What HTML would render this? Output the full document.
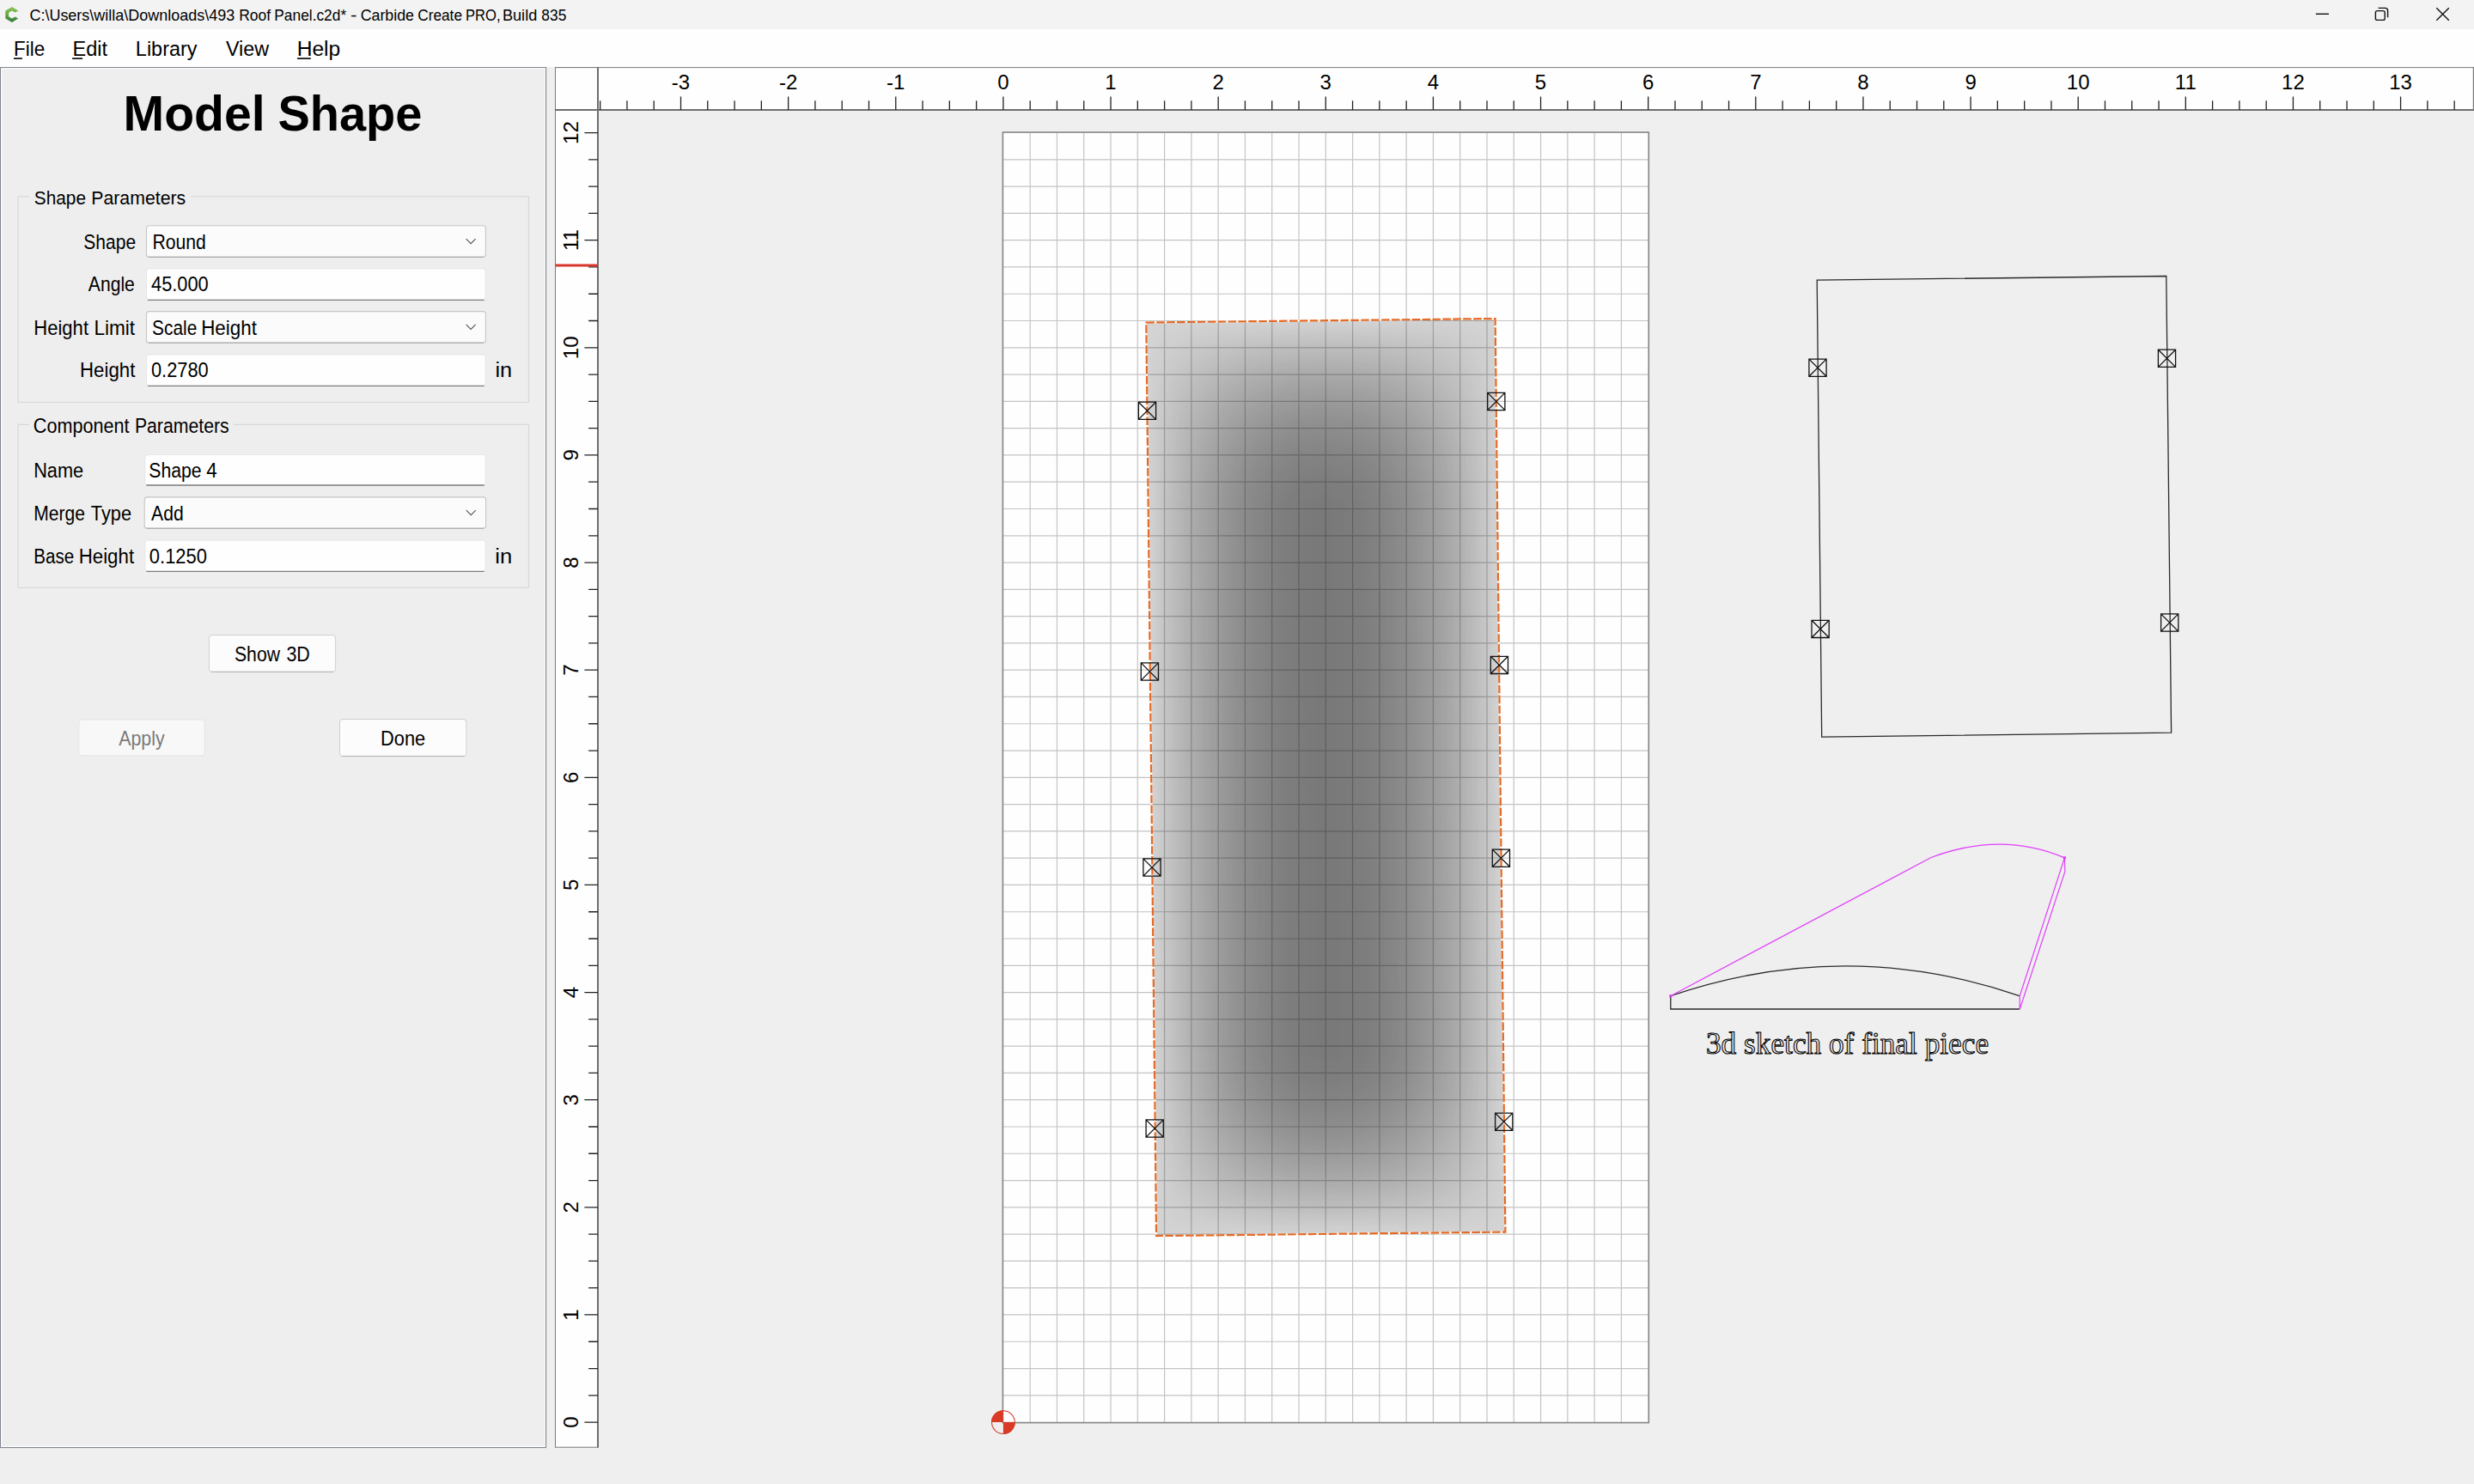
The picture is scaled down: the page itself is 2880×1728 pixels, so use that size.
<!DOCTYPE html><html><head><meta charset="utf-8"><style>html,body{margin:0;padding:0;width:2880px;height:1728px;overflow:hidden;background:#efefef}</style></head><body><svg width="2880" height="1728" viewBox="0 0 2880 1728" style="position:absolute;left:0;top:0">
<rect x="0" y="0" width="2880" height="1728" fill="#efefef"/>
<rect x="0" y="0" width="2880" height="34" fill="#f3f3f3"/>
<rect x="0" y="34" width="2880" height="44" fill="#fefefe"/>
<defs><linearGradient id="ig" x1="0" y1="0" x2="0" y2="1"><stop offset="0" stop-color="#8cc45a"/><stop offset="0.45" stop-color="#6aaa48"/><stop offset="1" stop-color="#2f7a3c"/></linearGradient></defs>
<g transform="translate(13.9,17)"><path d="M7.4,-4.5 L0,-8.9 L-7.6,-4.5 L-7.6,4.5 L0,8.9 L7.4,4.5 L3.7,2.4 L0,4.5 L-3.8,2.3 L-3.8,-2.3 L0,-4.5 L3.7,-2.4 Z" fill="url(#ig)"/></g>
<text transform="matrix(0.9589 0 0 1 34.44 23.90)" font-family="Liberation Sans" font-weight="normal" font-size="18.76" fill="#000" >C:\Users\willa\Downloads\493</text>
<text transform="matrix(0.9338 0 0 1 278.20 23.90)" font-family="Liberation Sans" font-weight="normal" font-size="18.76" fill="#000" >Roof</text>
<text transform="matrix(0.9249 0 0 1 319.31 23.90)" font-family="Liberation Sans" font-weight="normal" font-size="18.76" fill="#000" >Panel.c2d*</text>
<text transform="matrix(1.2000 0 0 1 407.95 23.90)" font-family="Liberation Sans" font-weight="normal" font-size="18.76" fill="#000" >-</text>
<text transform="matrix(0.9487 0 0 1 419.65 23.90)" font-family="Liberation Sans" font-weight="normal" font-size="18.76" fill="#000" >Carbide</text>
<text transform="matrix(0.9211 0 0 1 486.18 23.90)" font-family="Liberation Sans" font-weight="normal" font-size="18.76" fill="#000" >Create</text>
<text transform="matrix(0.8845 0 0 1 542.07 23.90)" font-family="Liberation Sans" font-weight="normal" font-size="18.76" fill="#000" >PRO,</text>
<text transform="matrix(0.9667 0 0 1 584.95 23.90)" font-family="Liberation Sans" font-weight="normal" font-size="18.76" fill="#000" >Build</text>
<text transform="matrix(0.9277 0 0 1 630.30 23.90)" font-family="Liberation Sans" font-weight="normal" font-size="18.76" fill="#000" >835</text>
<line x1="2695.9" y1="16.3" x2="2711" y2="16.3" stroke="#111" stroke-width="1.4"/>
<rect x="2765.4" y="12.6" width="10.8" height="10.8" rx="2" fill="none" stroke="#111" stroke-width="1.4"/>
<path d="M2768.6,9.4 L2776.6,9.4 Q2779.6,9.4 2779.6,12.4 L2779.6,20.2" fill="none" stroke="#111" stroke-width="1.4"/>
<path d="M2836.3,9.3 L2850.8,23.8 M2850.8,9.3 L2836.3,23.8" stroke="#111" stroke-width="1.4"/>
<text transform="matrix(0.9250 0 0 1 15.95 64.80)" font-family="Liberation Sans" font-weight="normal" font-size="24.29" fill="#000" >File</text>
<text transform="matrix(0.9691 0 0 1 84.46 64.80)" font-family="Liberation Sans" font-weight="normal" font-size="24.29" fill="#000" >Edit</text>
<text transform="matrix(0.9650 0 0 1 157.87 64.80)" font-family="Liberation Sans" font-weight="normal" font-size="24.29" fill="#000" >Library</text>
<text transform="matrix(0.9612 0 0 1 262.98 64.80)" font-family="Liberation Sans" font-weight="normal" font-size="24.29" fill="#000" >View</text>
<text transform="matrix(1.0133 0 0 1 345.67 64.80)" font-family="Liberation Sans" font-weight="normal" font-size="24.29" fill="#000" >Help</text>
<rect x="16" y="67.3" width="9.9" height="1.6" fill="#000"/>
<rect x="84.1" y="67.3" width="12.0" height="1.6" fill="#000"/>
<rect x="346" y="67.3" width="15.8" height="1.6" fill="#000"/>
<rect x="0.5" y="78.6" width="635" height="1606.9" fill="#eeeeee" stroke="#80858e" stroke-width="1.2"/>
<rect x="1.6" y="79.7" width="632.8" height="1604.7" fill="none" stroke="#ffffff" stroke-width="1"/>
<text transform="matrix(0.9981 0 0 1 143.53 152.10)" font-family="Liberation Sans" font-weight="bold" font-size="57.31" fill="#000" >Model</text>
<text transform="matrix(0.9771 0 0 1 323.41 152.10)" font-family="Liberation Sans" font-weight="bold" font-size="57.31" fill="#000" >Shape</text>
<path d="M34,228.8 L21,228.8 L21,468.4 L615.5,468.4 L615.5,228.8 L222,228.8" fill="none" stroke="#d9d9d9" stroke-width="1.2"/>
<path d="M34,494.4 L21,494.4 L21,684.4 L615.5,684.4 L615.5,494.4 L272,494.4" fill="none" stroke="#d9d9d9" stroke-width="1.2"/>
<text transform="matrix(0.9238 0 0 1 39.78 237.80)" font-family="Liberation Sans" font-weight="normal" font-size="22.55" fill="#000" >Shape</text>
<text transform="matrix(0.9443 0 0 1 106.23 237.80)" font-family="Liberation Sans" font-weight="normal" font-size="22.55" fill="#000" >Parameters</text>
<text transform="matrix(0.9353 0 0 1 38.85 504.30)" font-family="Liberation Sans" font-weight="normal" font-size="23.13" fill="#000" >Component</text>
<text transform="matrix(0.9189 0 0 1 156.88 504.30)" font-family="Liberation Sans" font-weight="normal" font-size="23.13" fill="#000" >Parameters</text>
<rect x="170.5" y="262.70000000000005" width="394.9000000000001" height="36.69999999999993" rx="3" fill="#fbfbfb" stroke="#c6c6c6" stroke-width="1.1"/>
<line x1="173.0" y1="299.29999999999995" x2="562.9000000000001" y2="299.29999999999995" stroke="#a2a2a2" stroke-width="1"/>
<path d="M542.6000000000001,278.05 L548.1000000000001,283.65000000000003 L553.6000000000001,278.05" fill="none" stroke="#555" stroke-width="1.1"/>
<rect x="170.5" y="312.90000000000003" width="394.70000000000005" height="36.69999999999993" rx="3" fill="#fefefe" stroke="#e6e6e6" stroke-width="1"/>
<line x1="172.0" y1="349.29999999999995" x2="563.7" y2="349.29999999999995" stroke="#7b7b7b" stroke-width="1.3"/>
<rect x="170.5" y="362.6" width="394.9000000000001" height="36.599999999999966" rx="3" fill="#fbfbfb" stroke="#c6c6c6" stroke-width="1.1"/>
<line x1="173.0" y1="399.09999999999997" x2="562.9000000000001" y2="399.09999999999997" stroke="#a2a2a2" stroke-width="1"/>
<path d="M542.6000000000001,377.9 L548.1000000000001,383.5 L553.6000000000001,377.9" fill="none" stroke="#555" stroke-width="1.1"/>
<rect x="170.5" y="413.0" width="394.70000000000005" height="36.599999999999966" rx="3" fill="#fefefe" stroke="#e6e6e6" stroke-width="1"/>
<line x1="172.0" y1="449.29999999999995" x2="563.7" y2="449.29999999999995" stroke="#7b7b7b" stroke-width="1.3"/>
<rect x="168.8" y="529.5" width="396.40000000000003" height="35.799999999999955" rx="3" fill="#fefefe" stroke="#e6e6e6" stroke-width="1"/>
<line x1="170.3" y1="565.0" x2="563.7" y2="565.0" stroke="#7b7b7b" stroke-width="1.3"/>
<rect x="168.20000000000002" y="578.9" width="397.4" height="36.39999999999998" rx="3" fill="#fbfbfb" stroke="#c6c6c6" stroke-width="1.1"/>
<line x1="170.70000000000002" y1="615.1999999999999" x2="563.1" y2="615.1999999999999" stroke="#a2a2a2" stroke-width="1"/>
<path d="M542.8000000000001,594.0999999999999 L548.3000000000001,599.6999999999999 L553.8000000000001,594.0999999999999" fill="none" stroke="#555" stroke-width="1.1"/>
<rect x="168.8" y="629.1" width="396.40000000000003" height="36.5" rx="3" fill="#fefefe" stroke="#e6e6e6" stroke-width="1"/>
<line x1="170.3" y1="665.3000000000001" x2="563.7" y2="665.3000000000001" stroke="#7b7b7b" stroke-width="1.3"/>
<text transform="matrix(0.9046 0 0 1 97.28 290.20)" font-family="Liberation Sans" font-weight="normal" font-size="23.27" fill="#000" >Shape</text>
<text transform="matrix(0.9119 0 0 1 177.39 290.20)" font-family="Liberation Sans" font-weight="normal" font-size="23.27" fill="#000" >Round</text>
<text transform="matrix(0.9079 0 0 1 102.80 339.30)" font-family="Liberation Sans" font-weight="normal" font-size="23.27" fill="#000" >Angle</text>
<text transform="matrix(0.9379 0 0 1 176.03 339.30)" font-family="Liberation Sans" font-weight="normal" font-size="23.27" fill="#000" >45.000</text>
<text transform="matrix(0.9489 0 0 1 39.22 389.80)" font-family="Liberation Sans" font-weight="normal" font-size="23.27" fill="#000" >Height</text>
<text transform="matrix(0.9723 0 0 1 109.38 389.80)" font-family="Liberation Sans" font-weight="normal" font-size="23.27" fill="#000" >Limit</text>
<text transform="matrix(0.8964 0 0 1 177.09 389.80)" font-family="Liberation Sans" font-weight="normal" font-size="23.27" fill="#000" >Scale</text>
<text transform="matrix(0.9628 0 0 1 234.19 389.80)" font-family="Liberation Sans" font-weight="normal" font-size="23.27" fill="#000" >Height</text>
<text transform="matrix(0.9566 0 0 1 93.01 439.30)" font-family="Liberation Sans" font-weight="normal" font-size="23.27" fill="#000" >Height</text>
<text transform="matrix(0.9386 0 0 1 175.98 439.30)" font-family="Liberation Sans" font-weight="normal" font-size="23.27" fill="#000" >0.2780</text>
<text transform="matrix(1.0867 0 0 1 576.47 438.90)" font-family="Liberation Sans" font-weight="normal" font-size="23.27" fill="#000" >in</text>
<text transform="matrix(0.9353 0 0 1 39.15 556.20)" font-family="Liberation Sans" font-weight="normal" font-size="23.27" fill="#000" >Name</text>
<text transform="matrix(0.9123 0 0 1 173.27 556.20)" font-family="Liberation Sans" font-weight="normal" font-size="23.27" fill="#000" >Shape</text>
<text transform="matrix(0.9617 0 0 1 240.32 556.20)" font-family="Liberation Sans" font-weight="normal" font-size="23.27" fill="#000" >4</text>
<text transform="matrix(0.9048 0 0 1 39.20 606.00)" font-family="Liberation Sans" font-weight="normal" font-size="23.27" fill="#000" >Merge</text>
<text transform="matrix(0.9371 0 0 1 105.83 606.00)" font-family="Liberation Sans" font-weight="normal" font-size="23.27" fill="#000" >Type</text>
<text transform="matrix(0.9100 0 0 1 176.10 606.00)" font-family="Liberation Sans" font-weight="normal" font-size="23.27" fill="#000" >Add</text>
<text transform="matrix(0.8878 0 0 1 39.24 655.90)" font-family="Liberation Sans" font-weight="normal" font-size="23.27" fill="#000" >Base</text>
<text transform="matrix(0.9582 0 0 1 91.70 655.90)" font-family="Liberation Sans" font-weight="normal" font-size="23.27" fill="#000" >Height</text>
<text transform="matrix(0.9430 0 0 1 173.87 655.90)" font-family="Liberation Sans" font-weight="normal" font-size="23.27" fill="#000" >0.1250</text>
<text transform="matrix(1.1000 0 0 1 576.35 655.60)" font-family="Liberation Sans" font-weight="normal" font-size="23.27" fill="#000" >in</text>
<rect x="243.4" y="739.5" width="147.19999999999996" height="42.89999999999998" rx="3.5" fill="#fcfcfc" stroke="#d0d0d0" stroke-width="1"/>
<line x1="245.9" y1="782.3" x2="388.09999999999997" y2="782.3" stroke="#b0b0b0" stroke-width="1"/>
<rect x="91.8" y="837.9" width="146.5" height="42.0" rx="3.5" fill="#f8f8f8" stroke="#e4e4e4" stroke-width="1"/>
<rect x="395.5" y="837.5" width="147.4000000000001" height="43.10000000000002" rx="3.5" fill="#fcfcfc" stroke="#d0d0d0" stroke-width="1"/>
<line x1="398.0" y1="880.5" x2="540.4000000000001" y2="880.5" stroke="#b0b0b0" stroke-width="1"/>
<text transform="matrix(0.9103 0 0 1 272.98 770.40)" font-family="Liberation Sans" font-weight="normal" font-size="23.27" fill="#000" >Show</text>
<text transform="matrix(0.9225 0 0 1 333.39 770.40)" font-family="Liberation Sans" font-weight="normal" font-size="23.27" fill="#000" >3D</text>
<text transform="matrix(0.9187 0 0 1 138.20 868.40)" font-family="Liberation Sans" font-weight="normal" font-size="23.27" fill="#7a7a7a" >Apply</text>
<text transform="matrix(0.9387 0 0 1 443.04 868.40)" font-family="Liberation Sans" font-weight="normal" font-size="23.27" fill="#000" >Done</text>
<rect x="646.5" y="78.6" width="2233" height="49.4" fill="#fefefe" stroke="#7a7a7a" stroke-width="1"/>
<rect x="646.5" y="78.6" width="49.4" height="1606.6" fill="#fefefe" stroke="#7a7a7a" stroke-width="1"/>
<line x1="646" y1="128" x2="2880" y2="128" stroke="#6e6e6e" stroke-width="2"/>
<line x1="696" y1="78" x2="696" y2="1685.5" stroke="#6e6e6e" stroke-width="2"/>
<line x1="2879.4" y1="78" x2="2879.4" y2="128" stroke="#7a7a7a" stroke-width="1.2"/>
<path d="M698.66,117.2 L698.66,128 M729.95,117.2 L729.95,128 M761.23,117.2 L761.23,128 M792.51,112.4 L792.51,128 M823.79,117.2 L823.79,128 M855.08,117.2 L855.08,128 M886.36,117.2 L886.36,128 M917.64,112.4 L917.64,128 M948.92,117.2 L948.92,128 M980.21,117.2 L980.21,128 M1011.49,117.2 L1011.49,128 M1042.77,112.4 L1042.77,128 M1074.05,117.2 L1074.05,128 M1105.34,117.2 L1105.34,128 M1136.62,117.2 L1136.62,128 M1167.90,112.4 L1167.90,128 M1199.18,117.2 L1199.18,128 M1230.47,117.2 L1230.47,128 M1261.75,117.2 L1261.75,128 M1293.03,112.4 L1293.03,128 M1324.31,117.2 L1324.31,128 M1355.60,117.2 L1355.60,128 M1386.88,117.2 L1386.88,128 M1418.16,112.4 L1418.16,128 M1449.44,117.2 L1449.44,128 M1480.73,117.2 L1480.73,128 M1512.01,117.2 L1512.01,128 M1543.29,112.4 L1543.29,128 M1574.57,117.2 L1574.57,128 M1605.86,117.2 L1605.86,128 M1637.14,117.2 L1637.14,128 M1668.42,112.4 L1668.42,128 M1699.70,117.2 L1699.70,128 M1730.99,117.2 L1730.99,128 M1762.27,117.2 L1762.27,128 M1793.55,112.4 L1793.55,128 M1824.83,117.2 L1824.83,128 M1856.12,117.2 L1856.12,128 M1887.40,117.2 L1887.40,128 M1918.68,112.4 L1918.68,128 M1949.96,117.2 L1949.96,128 M1981.25,117.2 L1981.25,128 M2012.53,117.2 L2012.53,128 M2043.81,112.4 L2043.81,128 M2075.09,117.2 L2075.09,128 M2106.38,117.2 L2106.38,128 M2137.66,117.2 L2137.66,128 M2168.94,112.4 L2168.94,128 M2200.22,117.2 L2200.22,128 M2231.51,117.2 L2231.51,128 M2262.79,117.2 L2262.79,128 M2294.07,112.4 L2294.07,128 M2325.35,117.2 L2325.35,128 M2356.64,117.2 L2356.64,128 M2387.92,117.2 L2387.92,128 M2419.20,112.4 L2419.20,128 M2450.48,117.2 L2450.48,128 M2481.77,117.2 L2481.77,128 M2513.05,117.2 L2513.05,128 M2544.33,112.4 L2544.33,128 M2575.61,117.2 L2575.61,128 M2606.89,117.2 L2606.89,128 M2638.18,117.2 L2638.18,128 M2669.46,112.4 L2669.46,128 M2700.74,117.2 L2700.74,128 M2732.03,117.2 L2732.03,128 M2763.31,117.2 L2763.31,128 M2794.59,112.4 L2794.59,128 M2825.87,117.2 L2825.87,128 M2857.15,117.2 L2857.15,128" stroke="#222" stroke-width="1.3"/>
<g font-family="Liberation Sans" font-size="24" fill="#000"><text x="792.51" y="104.1" text-anchor="middle">-3</text><text x="917.64" y="104.1" text-anchor="middle">-2</text><text x="1042.77" y="104.1" text-anchor="middle">-1</text><text x="1167.90" y="104.1" text-anchor="middle">0</text><text x="1293.03" y="104.1" text-anchor="middle">1</text><text x="1418.16" y="104.1" text-anchor="middle">2</text><text x="1543.29" y="104.1" text-anchor="middle">3</text><text x="1668.42" y="104.1" text-anchor="middle">4</text><text x="1793.55" y="104.1" text-anchor="middle">5</text><text x="1918.68" y="104.1" text-anchor="middle">6</text><text x="2043.81" y="104.1" text-anchor="middle">7</text><text x="2168.94" y="104.1" text-anchor="middle">8</text><text x="2294.07" y="104.1" text-anchor="middle">9</text><text x="2419.20" y="104.1" text-anchor="middle">10</text><text x="2544.33" y="104.1" text-anchor="middle">11</text><text x="2669.46" y="104.1" text-anchor="middle">12</text><text x="2794.59" y="104.1" text-anchor="middle">13</text></g>
<path d="M680.4,1656.10 L696,1656.10 M685.1,1624.82 L696,1624.82 M685.1,1593.53 L696,1593.53 M685.1,1562.25 L696,1562.25 M680.4,1530.97 L696,1530.97 M685.1,1499.69 L696,1499.69 M685.1,1468.40 L696,1468.40 M685.1,1437.12 L696,1437.12 M680.4,1405.84 L696,1405.84 M685.1,1374.56 L696,1374.56 M685.1,1343.27 L696,1343.27 M685.1,1311.99 L696,1311.99 M680.4,1280.71 L696,1280.71 M685.1,1249.43 L696,1249.43 M685.1,1218.14 L696,1218.14 M685.1,1186.86 L696,1186.86 M680.4,1155.58 L696,1155.58 M685.1,1124.30 L696,1124.30 M685.1,1093.01 L696,1093.01 M685.1,1061.73 L696,1061.73 M680.4,1030.45 L696,1030.45 M685.1,999.17 L696,999.17 M685.1,967.88 L696,967.88 M685.1,936.60 L696,936.60 M680.4,905.32 L696,905.32 M685.1,874.04 L696,874.04 M685.1,842.75 L696,842.75 M685.1,811.47 L696,811.47 M680.4,780.19 L696,780.19 M685.1,748.91 L696,748.91 M685.1,717.62 L696,717.62 M685.1,686.34 L696,686.34 M680.4,655.06 L696,655.06 M685.1,623.78 L696,623.78 M685.1,592.49 L696,592.49 M685.1,561.21 L696,561.21 M680.4,529.93 L696,529.93 M685.1,498.65 L696,498.65 M685.1,467.37 L696,467.37 M685.1,436.08 L696,436.08 M680.4,404.80 L696,404.80 M685.1,373.52 L696,373.52 M685.1,342.23 L696,342.23 M685.1,310.95 L696,310.95 M680.4,279.67 L696,279.67 M685.1,248.39 L696,248.39 M685.1,217.11 L696,217.11 M685.1,185.82 L696,185.82 M680.4,154.54 L696,154.54" stroke="#222" stroke-width="1.3"/>
<g font-family="Liberation Sans" font-size="24" fill="#000"><text transform="translate(672.6,1656.10) rotate(-90)" text-anchor="middle">0</text><text transform="translate(672.6,1530.97) rotate(-90)" text-anchor="middle">1</text><text transform="translate(672.6,1405.84) rotate(-90)" text-anchor="middle">2</text><text transform="translate(672.6,1280.71) rotate(-90)" text-anchor="middle">3</text><text transform="translate(672.6,1155.58) rotate(-90)" text-anchor="middle">4</text><text transform="translate(672.6,1030.45) rotate(-90)" text-anchor="middle">5</text><text transform="translate(672.6,905.32) rotate(-90)" text-anchor="middle">6</text><text transform="translate(672.6,780.19) rotate(-90)" text-anchor="middle">7</text><text transform="translate(672.6,655.06) rotate(-90)" text-anchor="middle">8</text><text transform="translate(672.6,529.93) rotate(-90)" text-anchor="middle">9</text><text transform="translate(672.6,404.80) rotate(-90)" text-anchor="middle">10</text><text transform="translate(672.6,279.67) rotate(-90)" text-anchor="middle">11</text><text transform="translate(672.6,154.54) rotate(-90)" text-anchor="middle">12</text></g>
<line x1="646.5" y1="308.9" x2="696" y2="308.9" stroke="#d9372a" stroke-width="3"/>
<rect x="1167.90" y="154.54" width="750.78" height="1501.56" fill="#fefefe"/>
<path d="M1199.18,154.54 L1199.18,1656.10 M1230.47,154.54 L1230.47,1656.10 M1261.75,154.54 L1261.75,1656.10 M1293.03,154.54 L1293.03,1656.10 M1324.31,154.54 L1324.31,1656.10 M1355.60,154.54 L1355.60,1656.10 M1386.88,154.54 L1386.88,1656.10 M1418.16,154.54 L1418.16,1656.10 M1449.44,154.54 L1449.44,1656.10 M1480.73,154.54 L1480.73,1656.10 M1512.01,154.54 L1512.01,1656.10 M1543.29,154.54 L1543.29,1656.10 M1574.57,154.54 L1574.57,1656.10 M1605.86,154.54 L1605.86,1656.10 M1637.14,154.54 L1637.14,1656.10 M1668.42,154.54 L1668.42,1656.10 M1699.70,154.54 L1699.70,1656.10 M1730.99,154.54 L1730.99,1656.10 M1762.27,154.54 L1762.27,1656.10 M1793.55,154.54 L1793.55,1656.10 M1824.83,154.54 L1824.83,1656.10 M1856.12,154.54 L1856.12,1656.10 M1887.40,154.54 L1887.40,1656.10 M1167.90,185.82 L1918.68,185.82 M1167.90,217.10 L1918.68,217.10 M1167.90,248.39 L1918.68,248.39 M1167.90,279.67 L1918.68,279.67 M1167.90,310.95 L1918.68,310.95 M1167.90,342.23 L1918.68,342.23 M1167.90,373.52 L1918.68,373.52 M1167.90,404.80 L1918.68,404.80 M1167.90,436.08 L1918.68,436.08 M1167.90,467.36 L1918.68,467.36 M1167.90,498.65 L1918.68,498.65 M1167.90,529.93 L1918.68,529.93 M1167.90,561.21 L1918.68,561.21 M1167.90,592.49 L1918.68,592.49 M1167.90,623.78 L1918.68,623.78 M1167.90,655.06 L1918.68,655.06 M1167.90,686.34 L1918.68,686.34 M1167.90,717.62 L1918.68,717.62 M1167.90,748.91 L1918.68,748.91 M1167.90,780.19 L1918.68,780.19 M1167.90,811.47 L1918.68,811.47 M1167.90,842.75 L1918.68,842.75 M1167.90,874.04 L1918.68,874.04 M1167.90,905.32 L1918.68,905.32 M1167.90,936.60 L1918.68,936.60 M1167.90,967.88 L1918.68,967.88 M1167.90,999.17 L1918.68,999.17 M1167.90,1030.45 L1918.68,1030.45 M1167.90,1061.73 L1918.68,1061.73 M1167.90,1093.01 L1918.68,1093.01 M1167.90,1124.30 L1918.68,1124.30 M1167.90,1155.58 L1918.68,1155.58 M1167.90,1186.86 L1918.68,1186.86 M1167.90,1218.14 L1918.68,1218.14 M1167.90,1249.43 L1918.68,1249.43 M1167.90,1280.71 L1918.68,1280.71 M1167.90,1311.99 L1918.68,1311.99 M1167.90,1343.27 L1918.68,1343.27 M1167.90,1374.56 L1918.68,1374.56 M1167.90,1405.84 L1918.68,1405.84 M1167.90,1437.12 L1918.68,1437.12 M1167.90,1468.40 L1918.68,1468.40 M1167.90,1499.69 L1918.68,1499.69 M1167.90,1530.97 L1918.68,1530.97 M1167.90,1562.25 L1918.68,1562.25 M1167.90,1593.53 L1918.68,1593.53 M1167.90,1624.82 L1918.68,1624.82" stroke="#c4c4c4" stroke-width="1.2"/>
<rect x="1167.40" y="154.04" width="751.88" height="1502.56" fill="none" stroke="#848484" stroke-width="1.6"/>
<defs><linearGradient id="hg" gradientUnits="userSpaceOnUse" x1="-203.15" y1="0" x2="203.15" y2="0"><stop offset="0.0000" stop-color="#000" stop-opacity="0.0000"/><stop offset="0.0250" stop-color="#000" stop-opacity="0.0417"/><stop offset="0.0500" stop-color="#000" stop-opacity="0.0812"/><stop offset="0.0750" stop-color="#000" stop-opacity="0.1186"/><stop offset="0.1000" stop-color="#000" stop-opacity="0.1538"/><stop offset="0.1250" stop-color="#000" stop-opacity="0.1869"/><stop offset="0.1500" stop-color="#000" stop-opacity="0.2179"/><stop offset="0.1750" stop-color="#000" stop-opacity="0.2467"/><stop offset="0.2000" stop-color="#000" stop-opacity="0.2734"/><stop offset="0.2250" stop-color="#000" stop-opacity="0.2980"/><stop offset="0.2500" stop-color="#000" stop-opacity="0.3204"/><stop offset="0.2750" stop-color="#000" stop-opacity="0.3407"/><stop offset="0.3000" stop-color="#000" stop-opacity="0.3589"/><stop offset="0.3250" stop-color="#000" stop-opacity="0.3749"/><stop offset="0.3500" stop-color="#000" stop-opacity="0.3888"/><stop offset="0.3750" stop-color="#000" stop-opacity="0.4005"/><stop offset="0.4000" stop-color="#000" stop-opacity="0.4101"/><stop offset="0.4250" stop-color="#000" stop-opacity="0.4176"/><stop offset="0.4500" stop-color="#000" stop-opacity="0.4230"/><stop offset="0.4750" stop-color="#000" stop-opacity="0.4262"/><stop offset="0.5000" stop-color="#000" stop-opacity="0.4272"/><stop offset="0.5250" stop-color="#000" stop-opacity="0.4262"/><stop offset="0.5500" stop-color="#000" stop-opacity="0.4230"/><stop offset="0.5750" stop-color="#000" stop-opacity="0.4176"/><stop offset="0.6000" stop-color="#000" stop-opacity="0.4101"/><stop offset="0.6250" stop-color="#000" stop-opacity="0.4005"/><stop offset="0.6500" stop-color="#000" stop-opacity="0.3888"/><stop offset="0.6750" stop-color="#000" stop-opacity="0.3749"/><stop offset="0.7000" stop-color="#000" stop-opacity="0.3589"/><stop offset="0.7250" stop-color="#000" stop-opacity="0.3407"/><stop offset="0.7500" stop-color="#000" stop-opacity="0.3204"/><stop offset="0.7750" stop-color="#000" stop-opacity="0.2980"/><stop offset="0.8000" stop-color="#000" stop-opacity="0.2734"/><stop offset="0.8250" stop-color="#000" stop-opacity="0.2467"/><stop offset="0.8500" stop-color="#000" stop-opacity="0.2179"/><stop offset="0.8750" stop-color="#000" stop-opacity="0.1869"/><stop offset="0.9000" stop-color="#000" stop-opacity="0.1538"/><stop offset="0.9250" stop-color="#000" stop-opacity="0.1186"/><stop offset="0.9500" stop-color="#000" stop-opacity="0.0812"/><stop offset="0.9750" stop-color="#000" stop-opacity="0.0417"/><stop offset="1.0000" stop-color="#000" stop-opacity="0.0000"/></linearGradient><linearGradient id="vg" gradientUnits="userSpaceOnUse" x1="0" y1="-531.8" x2="0" y2="531.8"><stop offset="0.00000" stop-color="#fff" stop-opacity="0.0000"/><stop offset="0.01381" stop-color="#fff" stop-opacity="0.1211"/><stop offset="0.02762" stop-color="#fff" stop-opacity="0.2344"/><stop offset="0.04143" stop-color="#fff" stop-opacity="0.3398"/><stop offset="0.05524" stop-color="#fff" stop-opacity="0.4375"/><stop offset="0.06905" stop-color="#fff" stop-opacity="0.5273"/><stop offset="0.08286" stop-color="#fff" stop-opacity="0.6094"/><stop offset="0.09666" stop-color="#fff" stop-opacity="0.6836"/><stop offset="0.11047" stop-color="#fff" stop-opacity="0.7500"/><stop offset="0.12428" stop-color="#fff" stop-opacity="0.8086"/><stop offset="0.13809" stop-color="#fff" stop-opacity="0.8594"/><stop offset="0.15190" stop-color="#fff" stop-opacity="0.9023"/><stop offset="0.16571" stop-color="#fff" stop-opacity="0.9375"/><stop offset="0.17952" stop-color="#fff" stop-opacity="0.9648"/><stop offset="0.19333" stop-color="#fff" stop-opacity="0.9844"/><stop offset="0.20714" stop-color="#fff" stop-opacity="0.9961"/><stop offset="0.22095" stop-color="#fff" stop-opacity="1.0000"/><stop offset="0.77905" stop-color="#fff" stop-opacity="1.0000"/><stop offset="0.79286" stop-color="#fff" stop-opacity="0.9961"/><stop offset="0.80667" stop-color="#fff" stop-opacity="0.9844"/><stop offset="0.82048" stop-color="#fff" stop-opacity="0.9648"/><stop offset="0.83429" stop-color="#fff" stop-opacity="0.9375"/><stop offset="0.84810" stop-color="#fff" stop-opacity="0.9023"/><stop offset="0.86191" stop-color="#fff" stop-opacity="0.8594"/><stop offset="0.87572" stop-color="#fff" stop-opacity="0.8086"/><stop offset="0.88953" stop-color="#fff" stop-opacity="0.7500"/><stop offset="0.90334" stop-color="#fff" stop-opacity="0.6836"/><stop offset="0.91714" stop-color="#fff" stop-opacity="0.6094"/><stop offset="0.93095" stop-color="#fff" stop-opacity="0.5273"/><stop offset="0.94476" stop-color="#fff" stop-opacity="0.4375"/><stop offset="0.95857" stop-color="#fff" stop-opacity="0.3398"/><stop offset="0.97238" stop-color="#fff" stop-opacity="0.2344"/><stop offset="0.98619" stop-color="#fff" stop-opacity="0.1211"/><stop offset="1.00000" stop-color="#fff" stop-opacity="0.0000"/></linearGradient><mask id="vm" maskUnits="userSpaceOnUse" x="-208.15" y="-536.8" width="416.3" height="1073.6"><rect x="-203.15" y="-531.8" width="406.3" height="1063.6" fill="url(#vg)"/></mask></defs>
<g transform="translate(1543.35,905.05) rotate(-0.634)">
<rect x="-203.15" y="-531.8" width="406.3" height="1063.6" fill="#000" fill-opacity="0.1647"/>
<rect x="-203.15" y="-531.8" width="406.3" height="1063.6" fill="url(#hg)" mask="url(#vm)"/>
<rect x="-203.15" y="-531.8" width="406.3" height="1063.6" fill="none" stroke="#ffffff" stroke-width="2.2"/>
<rect x="-203.15" y="-531.8" width="406.3" height="1063.6" fill="none" stroke="#e56a25" stroke-width="2.2" stroke-dasharray="9.6 2.3"/>
</g>
<path d="M1325.40,468.20 h20.2 v20.2 h-20.2 Z M1325.40,468.20 L1345.60,488.40 M1345.60,468.20 L1325.40,488.40" fill="none" stroke="#111" stroke-width="1.3"/>
<path d="M1328.30,771.90 h20.2 v20.2 h-20.2 Z M1328.30,771.90 L1348.50,792.10 M1348.50,771.90 L1328.30,792.10" fill="none" stroke="#111" stroke-width="1.3"/>
<path d="M1330.90,999.90 h20.2 v20.2 h-20.2 Z M1330.90,999.90 L1351.10,1020.10 M1351.10,999.90 L1330.90,1020.10" fill="none" stroke="#111" stroke-width="1.3"/>
<path d="M1334.10,1303.90 h20.2 v20.2 h-20.2 Z M1334.10,1303.90 L1354.30,1324.10 M1354.30,1303.90 L1334.10,1324.10" fill="none" stroke="#111" stroke-width="1.3"/>
<path d="M1731.70,457.40 h20.2 v20.2 h-20.2 Z M1731.70,457.40 L1751.90,477.60 M1751.90,457.40 L1731.70,477.60" fill="none" stroke="#111" stroke-width="1.3"/>
<path d="M1735.30,764.30 h20.2 v20.2 h-20.2 Z M1735.30,764.30 L1755.50,784.50 M1755.50,764.30 L1735.30,784.50" fill="none" stroke="#111" stroke-width="1.3"/>
<path d="M1737.30,989.10 h20.2 v20.2 h-20.2 Z M1737.30,989.10 L1757.50,1009.30 M1757.50,989.10 L1737.30,1009.30" fill="none" stroke="#111" stroke-width="1.3"/>
<path d="M1740.60,1296.10 h20.2 v20.2 h-20.2 Z M1740.60,1296.10 L1760.80,1316.30 M1760.80,1296.10 L1740.60,1316.30" fill="none" stroke="#111" stroke-width="1.3"/>
<path d="M1167.9,1656.1 L1154.0,1656.1 A13.9,13.9 0 0 1 1167.9,1642.1999999999998 Z M1167.9,1656.1 L1181.8000000000002,1656.1 A13.9,13.9 0 0 1 1167.9,1670.0 Z" fill="#d93a26"/>
<circle cx="1167.9" cy="1656.1" r="13.4" fill="none" stroke="#d93a26" stroke-width="1.1"/>
<path d="M2115.2,326.2 L2521.8,321.5 L2527.6,853.2 L2120.7,858.2 Z" fill="none" stroke="#2a2a2a" stroke-width="1.3"/>
<path d="M2105.90,418.10 h20.2 v20.2 h-20.2 Z M2105.90,418.10 L2126.10,438.30 M2126.10,418.10 L2105.90,438.30" fill="none" stroke="#111" stroke-width="1.3"/>
<path d="M2109.00,722.30 h20.2 v20.2 h-20.2 Z M2109.00,722.30 L2129.20,742.50 M2129.20,722.30 L2109.00,742.50" fill="none" stroke="#111" stroke-width="1.3"/>
<path d="M2512.40,407.20 h20.2 v20.2 h-20.2 Z M2512.40,407.20 L2532.60,427.40 M2532.60,407.20 L2512.40,427.40" fill="none" stroke="#111" stroke-width="1.3"/>
<path d="M2515.60,714.90 h20.2 v20.2 h-20.2 Z M2515.60,714.90 L2535.80,735.10 M2535.80,714.90 L2515.60,735.10" fill="none" stroke="#111" stroke-width="1.3"/>
<path d="M1944.8,1159.7 L1944.8,1175 L2350.9,1175" fill="none" stroke="#2a2a2a" stroke-width="1.3"/>
<path d="M1944.8,1159.7 Q2149,1090 2350.9,1159.7" fill="none" stroke="#2a2a2a" stroke-width="1.3"/>
<path d="M1944.8,1159.7 L2248,998.5 Q2330.2,967.5 2403.4,998.9" fill="none" stroke="#e040fb" stroke-width="1.3"/>
<path d="M2351.2,1159.7 L2403.3,999.1 L2403.9,1014.7 L2351.2,1175.3 Z" fill="none" stroke="#e040fb" stroke-width="1.2"/>
<rect x="1943.2" y="1158.2" width="3.2" height="3.2" fill="#e040fb"/>
<rect x="2401.8" y="997.3" width="3.2" height="3.2" fill="#e040fb"/>
<text transform="matrix(0.9873 0 0 1 1985.97 1226.80)" font-family="Liberation Serif" font-weight="normal" font-size="35.73" fill="none" stroke="#000" stroke-width="1.1">3d sketch of final piece</text>
</svg></body></html>
